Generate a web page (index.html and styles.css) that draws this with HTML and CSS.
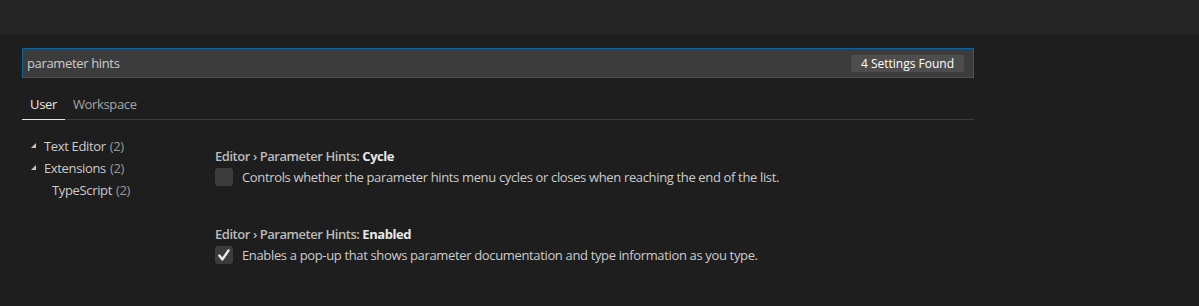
FILE: index.html
```html
<!DOCTYPE html>
<html>
<head>
<meta charset="utf-8">
<link rel="stylesheet" href="styles.css">
</head>
<body>
<div class="topbar"></div>
<div class="editor">
  <div class="search">
    <span class="query">parameter hints</span>
    <span class="badge">4 Settings Found</span>
  </div>
  <div class="tabs">
    <span class="tab active">User</span>
    <span class="tab">Workspace</span>
  </div>
  <div class="body">
    <div class="toc">
      <div class="toc-row"><span class="twisty"></span>Text Editor <span class="count">(2)</span></div>
      <div class="toc-row"><span class="twisty"></span>Extensions <span class="count">(2)</span></div>
      <div class="toc-row child">TypeScript <span class="count">(2)</span></div>
    </div>
    <div class="settings">
      <div class="setting">
        <div class="title">Editor › Parameter Hints: <b>Cycle</b></div>
        <div class="value"><span class="checkbox"></span><span class="desc">Controls whether the parameter hints menu cycles or closes when reaching the end of the list.</span></div>
      </div>
      <div class="setting">
        <div class="title">Editor › Parameter Hints: <b>Enabled</b></div>
        <div class="value"><span class="checkbox checked"><svg viewBox="0 0 18 18" width="18" height="18"><path d="M4.3 9.6 L7.4 13.4 L13.6 4.4" fill="none" stroke="#ececec" stroke-width="2.4" stroke-linecap="round" stroke-linejoin="round"/></svg></span><span class="desc">Enables a pop-up that shows parameter documentation and type information as you type.</span></div>
      </div>
    </div>
  </div>
</div>
</body>
</html>
```
FILE: styles.css
```css
html, body {
  margin: 0;
  padding: 0;
  background: #1e1e1e;
  font-family: "Open Sans", "Noto Sans", sans-serif;
  font-size: 13px;
  letter-spacing: -0.35px;
  color: #cccccc;
  height: 306px;
  overflow: hidden;
}
.topbar {
  height: 34px;
  background: #252526;
}
.editor {
  width: 952px;
  padding: 14px 0 0 22px;
}
.search {
  box-sizing: border-box;
  height: 30px;
  border: 1px solid #0e639c;
  background: #3c3c3c;
  display: flex;
  align-items: center;
  justify-content: space-between;
  padding: 0 9px 0 4px;
}
.query {
  color: #cccccc;
}
.badge {
  background: #4d4d4d;
  color: #ffffff;
  font-size: 12px;
  letter-spacing: 0;
  height: 17px;
  line-height: 17px;
  width: 113px;
  text-align: center;
  border-radius: 2px;
}
.tabs {
  margin-top: 14px;
  display: flex;
  border-bottom: 1px solid #3b3b3b;
  height: 28px;
  box-sizing: border-box;
}
.tab {
  padding: 3px 8px 0;
  color: #a6a6a6;
}
.tab.active {
  color: #e7e7e7;
  border-bottom: 1px solid #e7e7e7;
  margin-bottom: -1px;
}
.body {
  display: flex;
  padding-top: 15px;
}
.toc {
  width: 193px;
}
.toc-row {
  height: 22px;
  line-height: 22px;
  display: flex;
  align-items: center;
  color: #cccccc;
  padding-left: 9px;
}
.toc-row .count {
  color: #9a9a9a;
  margin-left: 4px;
}
.toc-row.child {
  padding-left: 30px;
}
.twisty {
  width: 0;
  height: 0;
  border-left: 5px solid transparent;
  border-bottom: 5px solid #c5c5c5;
  margin-right: 8px;
  margin-top: -1px;
}
.settings {
  padding-top: 11px;
}
.setting {
  margin-bottom: 38px;
}
.title {
  font-weight: 600;
  color: #bbbbbb;
  letter-spacing: -0.45px;
  height: 20px;
  line-height: 20px;
}
.title b {
  font-weight: 700;
  color: #e7e7e7;
}
.value {
  display: flex;
  align-items: center;
  margin-top: 2px;
}
.checkbox {
  width: 18px;
  height: 18px;
  border-radius: 3px;
  background: #3c3c3c;
  flex: none;
  margin-right: 9px;
  display: block;
}
.checkbox svg {
  display: block;
}
.desc {
  color: #cccccc;
}
```
